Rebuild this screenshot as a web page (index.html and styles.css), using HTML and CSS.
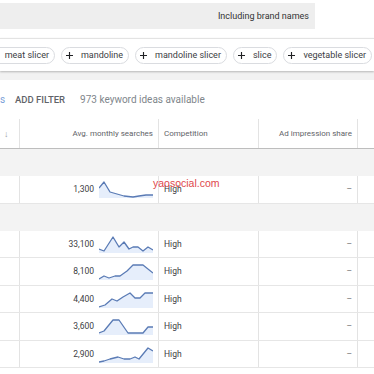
FILE: index.html
```html
<!DOCTYPE html>
<html lang="en">
<head>
    <meta charset="UTF-8">
    <meta name="viewport" content="width=device-width, initial-scale=1.0">
    <title>Keyword ideas</title>
    <link rel="stylesheet" href="styles.css">
</head>
<body>
    <div class="top">
        <div class="brand-box">Including brand names</div>
    </div>

    <div class="chips">
        <span class="chip"><svg class="plus" viewBox="0 0 8 8"><path d="M4 0 V8 M0 4 H8"/></svg>meat slicer</span>
        <span class="chip"><svg class="plus" viewBox="0 0 8 8"><path d="M4 0 V8 M0 4 H8"/></svg>mandoline</span>
        <span class="chip"><svg class="plus" viewBox="0 0 8 8"><path d="M4 0 V8 M0 4 H8"/></svg>mandoline slicer</span>
        <span class="chip"><svg class="plus" viewBox="0 0 8 8"><path d="M4 0 V8 M0 4 H8"/></svg>slice</span>
        <span class="chip"><svg class="plus" viewBox="0 0 8 8"><path d="M4 0 V8 M0 4 H8"/></svg>vegetable slicer</span>
    </div>
    <div class="band"></div>

    <div class="filters">
        <span class="link">s</span>
        <span class="add-filter">ADD FILTER</span>
        <span class="count">973 keyword ideas available</span>
    </div>

    <div class="table">
        <div class="row head">
            <div class="cell sort">&#8595;</div>
            <div class="cell right">Avg. monthly searches</div>
            <div class="cell">Competition</div>
            <div class="cell right">Ad impression share</div>
            <div class="cell"></div>
        </div>

        <div class="group"></div>

        <div class="row">
            <div class="cell"></div>
            <div class="cell right searches">1,300
                <svg class="spark" viewBox="0 0 54 18"><path class="fill" d="M0 8 L5 2 L11 12 L18 14 L25 16 L34 17 L40 16 L47 15 L54 15 L54 18 L0 18 Z"/><polyline points="0,8 5,2 11,12 18,14 25,16 34,17 40,16 47,15 54,15"/></svg>
            </div>
            <div class="cell">High</div>
            <div class="cell right dash">&ndash;</div>
            <div class="cell"></div>
        </div>

        <div class="group"></div>

        <div class="row">
            <div class="cell"></div>
            <div class="cell right searches">33,100
                <svg class="spark" viewBox="0 0 54 18"><path class="fill" d="M0 14 L5 16 L14 2 L20 12 L25 7 L30 14 L34 12 L39 12 L44 16 L49 12 L54 15 L54 18 L0 18 Z"/><polyline points="0,14 5,16 14,2 20,12 25,7 30,14 34,12 39,12 44,16 49,12 54,15"/></svg>
            </div>
            <div class="cell">High</div>
            <div class="cell right dash">&ndash;</div>
            <div class="cell"></div>
        </div>
        <div class="row">
            <div class="cell"></div>
            <div class="cell right searches">8,100
                <svg class="spark" viewBox="0 0 54 18"><path class="fill" d="M0 17 L5 14 L10 16 L16 14 L21 14 L28 9 L34 3 L44 3 L54 11 L54 18 L0 18 Z"/><polyline points="0,17 5,14 10,16 16,14 21,14 28,9 34,3 44,3 54,11"/></svg>
            </div>
            <div class="cell">High</div>
            <div class="cell right dash">&ndash;</div>
            <div class="cell"></div>
        </div>
        <div class="row">
            <div class="cell"></div>
            <div class="cell right searches">4,400
                <svg class="spark" viewBox="0 0 54 18"><path class="fill" d="M0 17 L6 15 L13 9 L18 11 L24 7 L31 3 L36 8 L41 8 L46 3 L54 3 L54 18 L0 18 Z"/><polyline points="0,17 6,15 13,9 18,11 24,7 31,3 36,8 41,8 46,3 54,3"/></svg>
            </div>
            <div class="cell">High</div>
            <div class="cell right dash">&ndash;</div>
            <div class="cell"></div>
        </div>
        <div class="row">
            <div class="cell"></div>
            <div class="cell right searches">3,600
                <svg class="spark" viewBox="0 0 54 18"><path class="fill" d="M0 16 L5 14 L14 3 L20 3 L29 16 L44 16 L49 10 L54 10 L54 18 L0 18 Z"/><polyline points="0,16 5,14 14,3 20,3 29,16 44,16 49,10 54,10"/></svg>
            </div>
            <div class="cell">High</div>
            <div class="cell right dash">&ndash;</div>
            <div class="cell"></div>
        </div>
        <div class="row">
            <div class="cell"></div>
            <div class="cell right searches">2,900
                <svg class="spark" viewBox="0 0 54 18"><path class="fill" d="M0 17 L5 16 L11 14 L19 12 L25 14 L31 14 L36 12 L40 14 L49 3 L54 6 L54 18 L0 18 Z"/><polyline points="0,17 5,16 11,14 19,12 25,14 31,14 36,12 40,14 49,3 54,6"/></svg>
            </div>
            <div class="cell">High</div>
            <div class="cell right dash">&ndash;</div>
            <div class="cell"></div>
        </div>
    </div>

    <div class="watermark">yaosocial.com</div>
</body>
</html>
```

FILE: styles.css
```css
body {
    margin: 0;
    width: 374px;
    height: 374px;
    overflow: hidden;
    position: relative;
    font-family: Roboto, "Noto Sans", sans-serif;
    background-color: #fff;
    color: #3c4043;
}

.top {
    height: 38px;
    padding-top: 3px;
    box-sizing: border-box;
}

.brand-box {
    width: 315px;
    height: 26px;
    background-color: #eeeeee;
    display: flex;
    justify-content: flex-end;
    align-items: center;
    padding-right: 6px;
    box-sizing: border-box;
    font-size: 9px;
    color: #333;
}

.chips {
    height: 32px;
    border-top: 1px solid #e3e3e3;
    display: flex;
    justify-content: flex-end;
    align-items: center;
    gap: 6px;
    padding-right: 2px;
    overflow: hidden;
    box-shadow: 0 1px 2px rgba(0, 0, 0, 0.25);
    position: relative;
}

.chip {
    flex-shrink: 0;
    height: 17px;
    box-sizing: border-box;
    border: 1px solid #dadce0;
    border-radius: 9px;
    display: flex;
    align-items: center;
    padding: 0 5px 0 4px;
    font-size: 9px;
    color: #3c4043;
    white-space: nowrap;
}

.plus {
    width: 7px;
    height: 7px;
    margin-right: 8px;
    flex-shrink: 0;
}

.plus path {
    stroke: #202124;
    stroke-width: 1.3;
    fill: none;
}

.band {
    height: 9px;
    background-color: #f2f2f2;
}

.filters {
    height: 39px;
    display: flex;
    align-items: center;
    font-size: 10px;
}

.link {
    color: #7aa0d8;
    width: 15px;
}

.add-filter {
    font-weight: 500;
    font-size: 9.5px;
    color: #5f6368;
    margin-right: 15px;
}

.count {
    color: #80868b;
    font-size: 10px;
}

.row {
    display: grid;
    grid-template-columns: 19px 139px 100px 99px 1fr;
    height: 27.5px;
    border-bottom: 1px solid #e6e6e6;
    box-sizing: border-box;
    font-size: 8.5px;
}

.row.head {
    height: 30px;
    border-bottom: 1px solid #bdbdbd;
    color: #5f6368;
    font-size: 8px;
}

.cell {
    display: flex;
    align-items: center;
    padding: 0 5px;
    box-sizing: border-box;
    border-left: 1px solid #e3e3e3;
    white-space: nowrap;
}

.cell:first-child {
    border-left: none;
}

.right {
    justify-content: flex-end;
}

.sort {
    color: #9aa0a6;
    font-size: 9px;
    padding-left: 4px;
}

.searches {
    gap: 5px;
}

.spark {
    width: 54px;
    height: 18px;
    flex-shrink: 0;
}

.spark .fill {
    fill: #e6eefb;
}

.spark polyline {
    fill: none;
    stroke: #5a7bb5;
    stroke-width: 1.3;
    stroke-linejoin: round;
}

.dash {
    color: #777;
}

.group {
    height: 27px;
    background-color: #f3f3f3;
}

.watermark {
    position: absolute;
    left: 153px;
    top: 177px;
    font-family: Arial, "Liberation Sans", sans-serif;
    font-size: 10.5px;
    color: #e0474c;
}
```
